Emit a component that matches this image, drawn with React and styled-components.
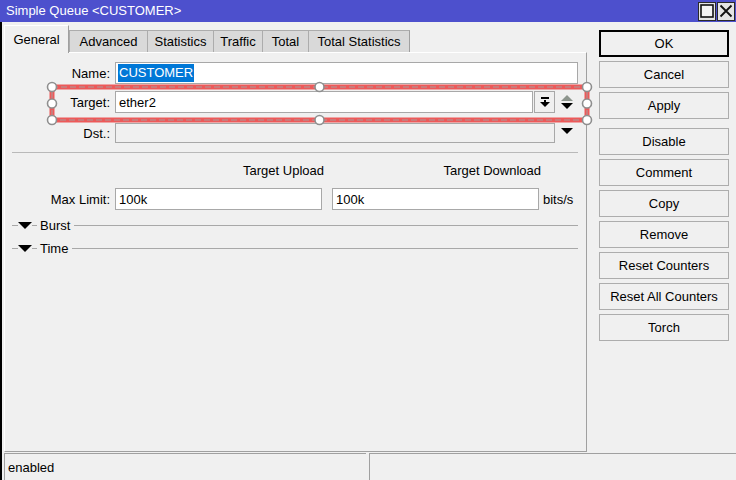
import React from 'react';
import styled, { createGlobalStyle } from 'styled-components';

const GlobalStyle = createGlobalStyle`
  * { box-sizing: border-box; }
  html, body { margin: 0; padding: 0; background: #f0f0f0; }
  body {
    font-family: "Liberation Sans", Arial, sans-serif;
    font-size: 13px;
    color: #000;
    width: 736px;
    height: 480px;
    overflow: hidden;
  }
`;

const Window = styled.div`
  width: 736px;
  height: 480px;
  display: flex;
  flex-direction: column;
  background: #f0f0f0;
`;

const TitleBar = styled.div`
  height: 22px;
  flex: none;
  background: #4d50cd;
  display: flex;
  align-items: center;
  padding-left: 6px;
  color: #fff;
  font-size: 13px;
`;

const TitleText = styled.span`
  flex: 1;
  line-height: 22px;
`;

const TitleButtons = styled.div`
  display: flex;
  gap: 1px;
  padding-right: 1px;
`;

const TitleButton = styled.div`
  width: 18px;
  height: 19px;
  background: #e4e4e4;
  border: 1px solid #2a2a2a;
  display: flex;
  align-items: center;
  justify-content: center;
`;

const Body = styled.div`
  flex: 1;
  min-height: 0;
  display: flex;
  flex-direction: column;
  border-left: 2px solid #000;
  padding-left: 2px;
`;

const Main = styled.div`
  height: 430px;
  flex: none;
  display: flex;
`;

const LeftColumn = styled.div`
  width: 583px;
  display: flex;
  flex-direction: column;
`;

const TabStrip = styled.div`
  height: 30px;
  flex: none;
  display: flex;
  align-items: flex-end;
  position: relative;
  z-index: 1;
`;

const Tab = styled.div`
  width: ${p => p.$w}px;
  height: ${p => (p.$active ? 28 : 22)}px;
  margin-bottom: ${p => (p.$active ? -1 : 0)}px;
  padding-top: ${p => (p.$active ? 6 : 3)}px;
  line-height: 15px;
  text-align: center;
  white-space: nowrap;
  background: ${p => (p.$active ? '#f0f0f0' : '#d9d9d9')};
  border-top: 1px solid ${p => (p.$active ? '#ffffff' : '#acacac')};
  border-left: 1px solid ${p => (p.$active ? '#ffffff' : '#acacac')};
  border-right: ${p => (p.$active || p.$last ? '1px solid #a0a0a0' : 'none')};
`;

const Panel = styled.div`
  flex: 1;
  position: relative;
  border: 1px solid;
  border-color: #ffffff #a0a0a0 #a0a0a0 #ffffff;
  padding: 9px 8px 0 0;
  display: flex;
  flex-direction: column;
`;

const FieldRow = styled.div`
  display: flex;
  align-items: center;
  height: ${p => p.$h}px;
  margin-top: ${p => p.$mt || 0}px;
`;

const Label = styled.div`
  width: 105px;
  flex: none;
  margin-right: 5px;
  text-align: right;
  white-space: nowrap;
`;

const Input = styled.div`
  flex: ${p => (p.$w ? 'none' : '1')};
  width: ${p => (p.$w ? `${p.$w}px` : 'auto')};
  margin-left: ${p => p.$ml || 0}px;
  height: 100%;
  background: ${p => (p.$disabled ? '#f0f0f0' : '#ffffff')};
  border: 1px solid #a8a8a8;
  display: flex;
  align-items: center;
  padding-left: 2px;
  white-space: nowrap;
  overflow: hidden;
`;

const Selected = styled.span`
  background: #0078d7;
  color: #fff;
  padding: 1px 1px;
  line-height: 16px;
`;

const PlainText = styled.span`
  padding-left: 1px;
`;

const DropButton = styled.div`
  width: 21px;
  height: 100%;
  flex: none;
  margin-left: 1px;
  border: 1px solid #a8a8a8;
  background: #f0f0f0;
  display: flex;
  align-items: center;
  justify-content: center;
`;

const SpinBox = styled.div`
  width: 23px;
  flex: none;
  height: 100%;
  display: flex;
  flex-direction: column;
  align-items: center;
  justify-content: center;
  gap: 2px;
  padding-left: 1px;
`;

const ArrowBox = styled.div`
  width: 23px;
  flex: none;
  height: 100%;
  display: flex;
  align-items: flex-start;
  justify-content: center;
  padding-top: 5px;
  padding-left: 1px;
`;

const Separator = styled.div`
  height: 1px;
  background: #b9b9b9;
  margin: 9px 0 0 7px;
  flex: none;
`;

const HeaderRow = styled.div`
  display: flex;
  margin-top: 10px;
  padding-left: 110px;
  line-height: 15px;
  height: 15px;
`;

const ColumnHead = styled.div`
  width: 209px;
  margin-left: ${p => p.$ml || 0}px;
  text-align: right;
  white-space: nowrap;
`;

const Unit = styled.div`
  margin-left: 4px;
  white-space: nowrap;
`;

const Collapsible = styled.div`
  display: flex;
  align-items: center;
  height: 16px;
  margin-top: 7px;
  padding-left: 7px;
`;

const Dash = styled.div`
  width: ${p => p.$w}px;
  height: 1px;
  background: #a8a8a8;
  flex: none;
`;

const SectionTitle = styled.span`
  margin: 0 4px 0 3px;
  white-space: nowrap;
`;

const Rule = styled.div`
  flex: 1;
  height: 1px;
  background: #a8a8a8;
`;

const SelectionOverlay = styled.svg`
  position: absolute;
  left: 41px;
  top: 28px;
  width: 548px;
  height: 45px;
  overflow: visible;
  pointer-events: none;
`;

const RightColumn = styled.div`
  width: 130px;
  margin-left: 12px;
  padding-top: 8px;
  display: flex;
  flex-direction: column;
  gap: 4px;
`;

const Button = styled.div`
  height: 27px;
  flex: none;
  margin-top: ${p => (p.$spaced ? 5 : 0)}px;
  border: ${p => (p.$default ? '2px solid #000' : '1px solid #adadad')};
  background: #f0f0f0;
  display: flex;
  align-items: center;
  justify-content: center;
  white-space: nowrap;
`;

const StatusBar = styled.div`
  height: 27px;
  flex: none;
  margin-top: 1px;
  display: flex;
  gap: 3px;
`;

const StatusCell = styled.div`
  width: ${p => (p.$w ? `${p.$w}px` : 'auto')};
  flex: ${p => (p.$w ? 'none' : '1')};
  border-top: 1px solid #a0a0a0;
  border-left: 1px solid #a0a0a0;
  display: flex;
  align-items: center;
  padding-left: 3px;
`;

const DownTriangle = ({ color = '#000', w = 12, h = 6 }) => (
  <svg width={w} height={h} viewBox={`0 0 ${w} ${h}`}>
    <polygon points={`0,0 ${w},0 ${w / 2},${h}`} fill={color} />
  </svg>
);

const UpTriangle = ({ color = '#8d958d', w = 12, h = 6 }) => (
  <svg width={w} height={h} viewBox={`0 0 ${w} ${h}`}>
    <polygon points={`${w / 2},0 ${w},${h} 0,${h}`} fill={color} />
  </svg>
);

const DropIcon = () => (
  <svg width="10" height="11" viewBox="0 0 10 11">
    <rect x="1" y="0" width="8" height="2" fill="#000" />
    <rect x="4" y="3" width="2" height="3" fill="#000" />
    <polygon points="0,5 10,5 5,10" fill="#000" />
  </svg>
);

const tabs = [
  { name: 'General', w: 65, active: true },
  { name: 'Advanced', w: 78 },
  { name: 'Statistics', w: 66 },
  { name: 'Traffic', w: 49 },
  { name: 'Total', w: 46 },
  { name: 'Total Statistics', w: 102, last: true },
];

const buttons = [
  { label: 'OK', def: true },
  { label: 'Cancel' },
  { label: 'Apply' },
  { label: 'Disable', spaced: true },
  { label: 'Comment' },
  { label: 'Copy' },
  { label: 'Remove' },
  { label: 'Reset Counters' },
  { label: 'Reset All Counters' },
  { label: 'Torch' },
];

const handles = [
  [6, 6], [273.5, 6], [541, 6],
  [6, 22.5], [541, 22.5],
  [6, 39], [273.5, 39], [541, 39],
];

export default function App() {
  return (
    <Window>
      <GlobalStyle />
      <TitleBar>
        <TitleText>Simple Queue &lt;CUSTOMER&gt;</TitleText>
        <TitleButtons>
          <TitleButton>
            <svg width="14" height="14" viewBox="0 0 14 14">
              <rect x="1" y="1" width="12" height="12" fill="#f4f4f4" stroke="#111" strokeWidth="1.6" />
            </svg>
          </TitleButton>
          <TitleButton>
            <svg width="14" height="14" viewBox="0 0 14 14">
              <path d="M1.5 1.5 L12.5 12.5 M12.5 1.5 L1.5 12.5" stroke="#111" strokeWidth="1.8" />
            </svg>
          </TitleButton>
        </TitleButtons>
      </TitleBar>
      <Body>
        <Main>
          <LeftColumn>
            <TabStrip>
              {tabs.map(t => (
                <Tab key={t.name} $w={t.w} $active={t.active} $last={t.last}>
                  {t.name}
                </Tab>
              ))}
            </TabStrip>
            <Panel>
              <FieldRow $h={22}>
                <Label>Name:</Label>
                <Input>
                  <Selected>CUSTOMER</Selected>
                </Input>
              </FieldRow>
              <FieldRow $h={22} $mt={7}>
                <Label>Target:</Label>
                <Input>
                  <PlainText>ether2</PlainText>
                </Input>
                <DropButton>
                  <DropIcon />
                </DropButton>
                <SpinBox>
                  <UpTriangle />
                  <DownTriangle />
                </SpinBox>
              </FieldRow>
              <FieldRow $h={20} $mt={10}>
                <Label>Dst.:</Label>
                <Input $disabled />
                <ArrowBox>
                  <DownTriangle />
                </ArrowBox>
              </FieldRow>
              <Separator />
              <HeaderRow>
                <ColumnHead>Target Upload</ColumnHead>
                <ColumnHead $ml={8}>Target Download</ColumnHead>
              </HeaderRow>
              <FieldRow $h={22} $mt={10}>
                <Label>Max Limit:</Label>
                <Input $w={207}>
                  <PlainText>100k</PlainText>
                </Input>
                <Input $w={207} $ml={10}>
                  <PlainText>100k</PlainText>
                </Input>
                <Unit>bits/s</Unit>
              </FieldRow>
              <Collapsible>
                <Dash $w={6} />
                <DownTriangle w={14} h={7} />
                <Dash $w={5} />
                <SectionTitle>Burst</SectionTitle>
                <Rule />
              </Collapsible>
              <Collapsible>
                <Dash $w={6} />
                <DownTriangle w={14} h={7} />
                <Dash $w={5} />
                <SectionTitle>Time</SectionTitle>
                <Rule />
              </Collapsible>

              <SelectionOverlay viewBox="0 0 548 45">
                <rect x="6" y="6" width="535" height="33" fill="none" stroke="#ec5a5a" strokeWidth="5" />
                <rect x="6" y="6" width="535" height="33" fill="none" stroke="#a89c9c" strokeWidth="1" strokeDasharray="6 3" />
                {handles.map(([x, y], i) => (
                  <circle key={i} cx={x} cy={y} r="4.5" fill="#fff" stroke="#8f8f8f" strokeWidth="1.6" />
                ))}
              </SelectionOverlay>
            </Panel>
          </LeftColumn>
          <RightColumn>
            {buttons.map(b => (
              <Button key={b.label} $default={b.def} $spaced={b.spaced}>
                {b.label}
              </Button>
            ))}
          </RightColumn>
        </Main>
        <StatusBar>
          <StatusCell $w={362}>enabled</StatusCell>
          <StatusCell />
        </StatusBar>
      </Body>
    </Window>
  );
}
